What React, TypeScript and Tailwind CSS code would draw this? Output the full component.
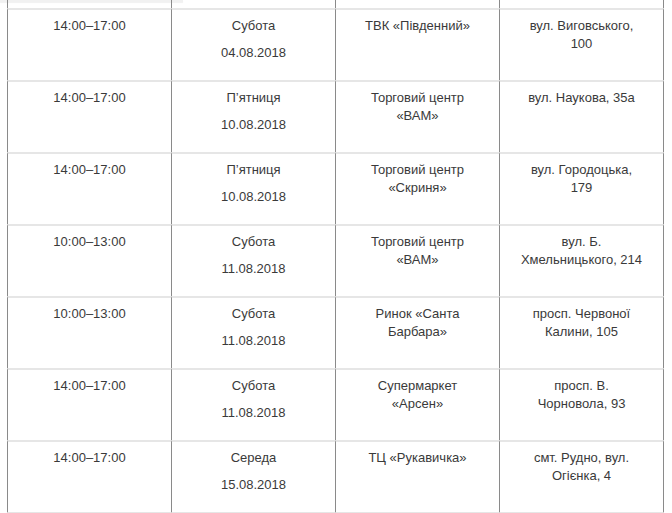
import React from 'react';

const rows = [
  { time: '14:00–17:00', day: 'Субота', date: '04.08.2018', place: ['ТВК «Південний»'], addr: ['вул. Виговського,', '100'] },
  { time: '14:00–17:00', day: 'П’ятниця', date: '10.08.2018', place: ['Торговий центр', '«ВАМ»'], addr: ['вул. Наукова, 35а'] },
  { time: '14:00–17:00', day: 'П’ятниця', date: '10.08.2018', place: ['Торговий центр', '«Скриня»'], addr: ['вул. Городоцька,', '179'] },
  { time: '10:00–13:00', day: 'Субота', date: '11.08.2018', place: ['Торговий центр', '«ВАМ»'], addr: ['вул. Б.', 'Хмельницького, 214'] },
  { time: '10:00–13:00', day: 'Субота', date: '11.08.2018', place: ['Ринок «Санта', 'Барбара»'], addr: ['просп. Червоної', 'Калини, 105'] },
  { time: '14:00–17:00', day: 'Субота', date: '11.08.2018', place: ['Супермаркет', '«Арсен»'], addr: ['просп. В.', 'Чорновола, 93'] },
  { time: '14:00–17:00', day: 'Середа', date: '15.08.2018', place: ['ТЦ «Рукавичка»'], addr: ['смт. Рудно, вул.', 'Огієнка, 4'] },
];

const cell = 'border-r border-r-[#8a8a8a] px-2 pt-[7px] text-center whitespace-nowrap';
const rowLine = 'border-t-2 border-t-[#e6e6e6]';

function Lines({ lines }: { lines: string[] }) {
  return (
    <>
      {lines.map((l, i) => (
        <div key={i}>{l}</div>
      ))}
    </>
  );
}

export default function App() {
  return (
    <div
      className="relative h-[513px] w-[672px] overflow-hidden bg-white text-[13px] leading-[18px] text-[#3a3a3a]"
      style={{ fontFamily: '"Liberation Sans", Arial, sans-serif' }}
    >
      <div className="absolute left-0 top-0 h-[2px] w-[183px] bg-[#f1f1f1] shadow-[0_1px_1px_rgba(0,0,0,0.06)]" />
      <div className="relative ml-[7px] w-[657px]">
        <div className="grid h-[8px] grid-cols-[165px_164px_164px_164px]">
          <div className="border-l border-l-[#8a8a8a] border-r border-r-[#8a8a8a]" />
          <div className="border-r border-r-[#8a8a8a]" />
          <div className="border-r border-r-[#8a8a8a]" />
          <div className="border-r border-r-[#8a8a8a]" />
        </div>
        {rows.map((r, i) => (
          <div key={i} className="grid h-[72px] grid-cols-[165px_164px_164px_164px]">
            <div className={`${cell} ${rowLine} border-l border-l-[#8a8a8a]`}>{r.time}</div>
            <div className={`${cell} ${rowLine}`}>
              <div>{r.day}</div>
              <div className="mt-[9px]">{r.date}</div>
            </div>
            <div className={`${cell} ${rowLine}`}>
              <Lines lines={r.place} />
            </div>
            <div className={`${cell} ${rowLine}`}>
              <Lines lines={r.addr} />
            </div>
          </div>
        ))}
        <div className="grid h-[8px] grid-cols-[165px_164px_164px_164px]">
          <div className={`${rowLine} border-l border-l-[#8a8a8a] border-r border-r-[#8a8a8a]`} />
          <div className={`${rowLine} border-r border-r-[#8a8a8a]`} />
          <div className={`${rowLine} border-r border-r-[#8a8a8a]`} />
          <div className={`${rowLine} border-r border-r-[#8a8a8a]`} />
        </div>
      </div>
    </div>
  );
}
